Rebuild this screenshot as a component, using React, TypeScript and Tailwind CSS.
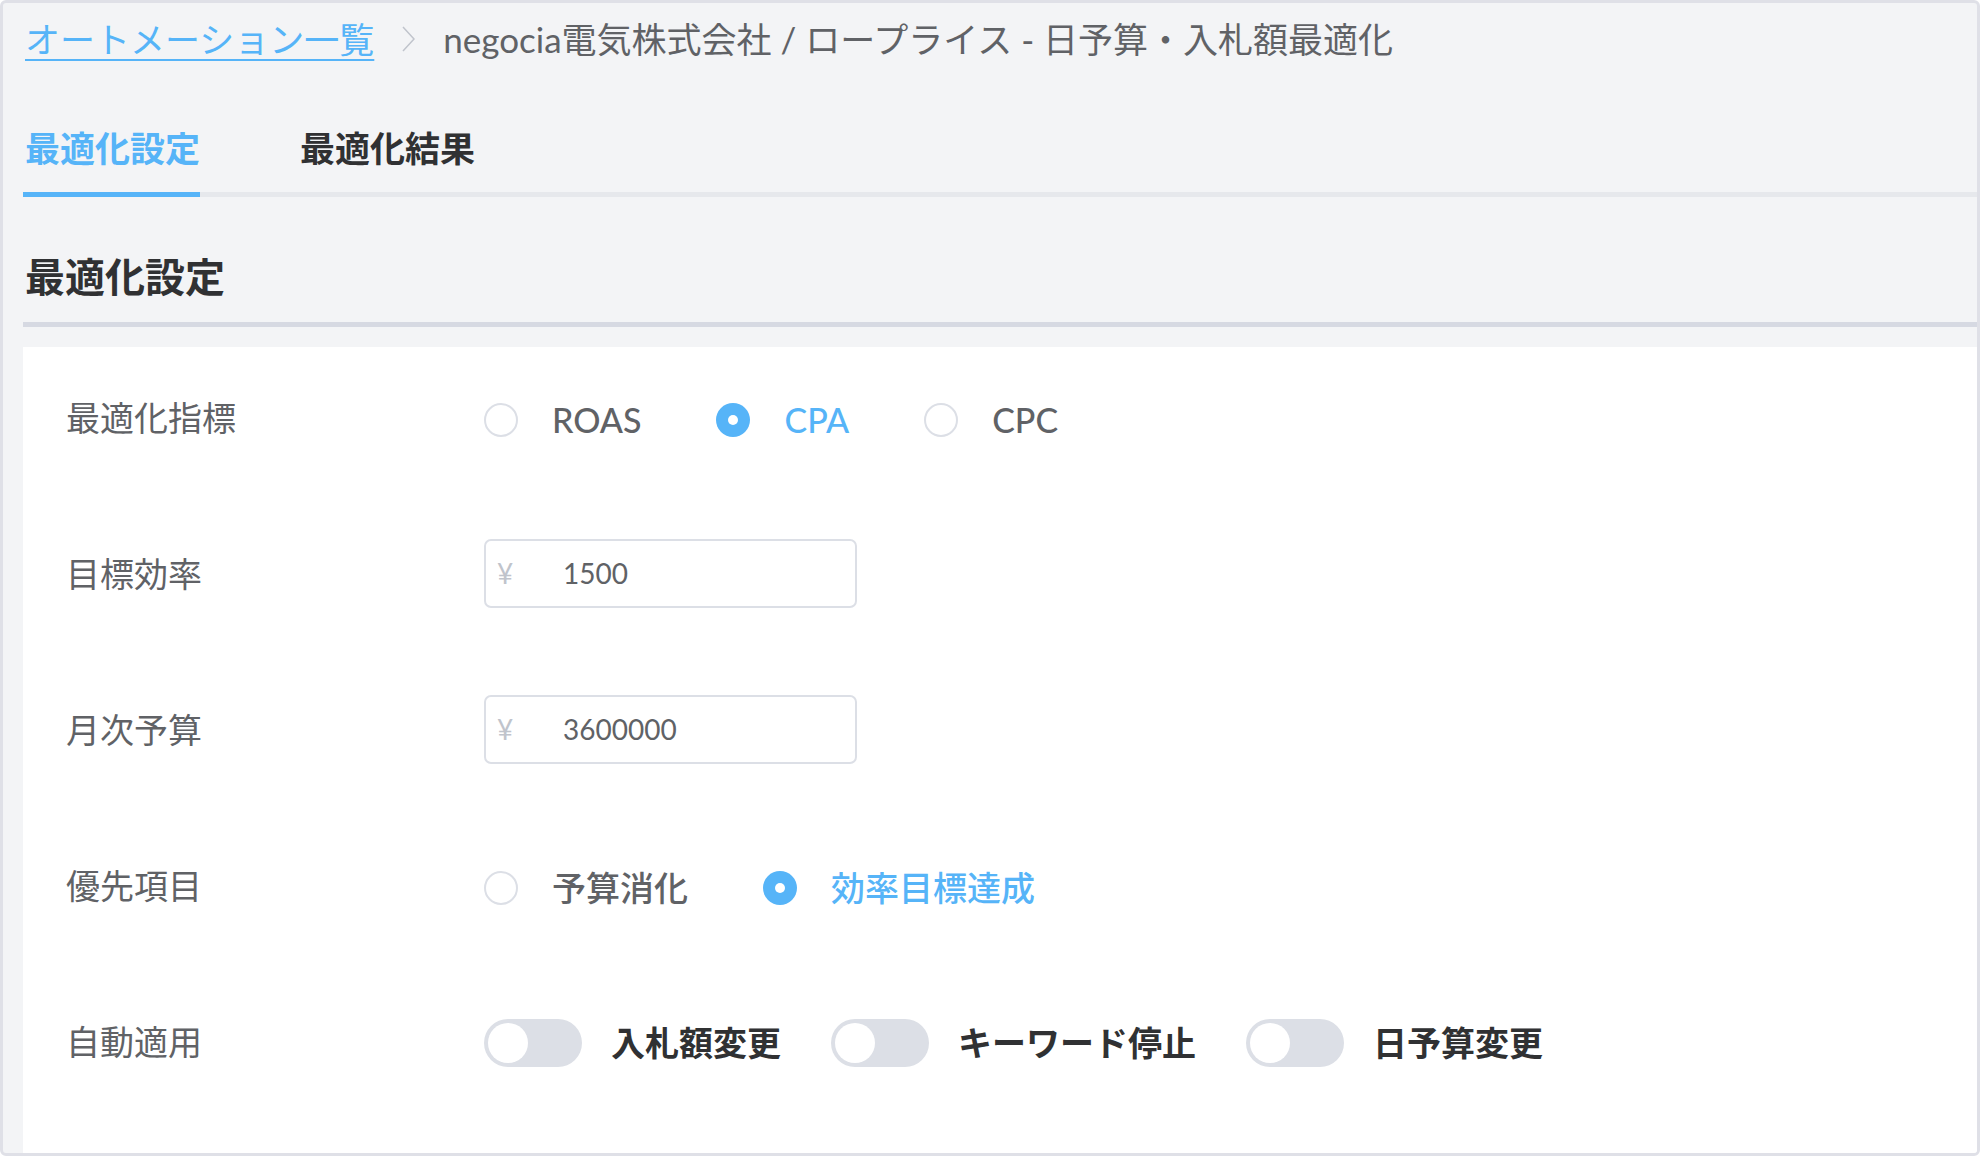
const blue = "text-[#56b4f8]";

function Radio({ label, checked }: { label: string; checked?: boolean }) {
  return (
    <div className="flex items-center gap-[34px]">
      {checked ? (
        <span className="w-[34px] h-[34px] rounded-full bg-[#56b4f8] flex items-center justify-center">
          <span className="w-[10px] h-[10px] rounded-full bg-white" />
        </span>
      ) : (
        <span className="w-[34px] h-[34px] rounded-full border-2 border-[#dcdfe6] bg-white" />
      )}
      <span className={`text-[34px] font-medium leading-none ${checked ? blue : "text-[#606266]"}`}>{label}</span>
    </div>
  );
}

function YenInput({ value }: { value: string }) {
  return (
    <div className="w-[373px] h-[69px] border-2 border-[#dcdfe6] rounded-[7px] bg-white flex items-center pl-[11px]">
      <span className="text-[28px] text-[#c0c4cc] w-[66px]">¥</span>
      <span className="text-[28px] text-[#606266]">{value}</span>
    </div>
  );
}

function Switch({ label }: { label: string }) {
  return (
    <div className="flex items-center gap-[29px] pt-[4px]">
      <span className="w-[98px] h-[48px] rounded-full bg-[#dcdfe6] flex items-center px-[4px]">
        <span className="w-[40px] h-[40px] rounded-full bg-white" />
      </span>
      <span className="text-[34px] font-bold text-[#303133] leading-none">{label}</span>
    </div>
  );
}

function Row({ label, children }: { label: string; children: React.ReactNode }) {
  return (
    <div className="flex items-center h-[70px]">
      <div className="w-[418px] text-[34px] text-[#606266]">{label}</div>
      <div className="flex items-center">{children}</div>
    </div>
  );
}

export default function App() {
  return (
    <div className="w-[1980px] h-[1156px] border-[3px] border-[#dfe0e7] rounded-[6px] bg-[#f3f4f6] flex flex-col font-['Lato','Noto_Sans_CJK_JP',sans-serif] overflow-hidden">
      {/* breadcrumb */}
      <div className="h-[72px] flex items-center pl-[22px] text-[35px] shrink-0">
        <a className={`${blue} underline decoration-2 underline-offset-[6px]`}>オートメーション一覧</a>
        <svg className="mx-[28px]" width="13" height="26" viewBox="0 0 13 26" fill="none">
          <polyline points="1,1 12,13 1,25" stroke="#c0c4cc" strokeWidth="1.5" />
        </svg>
        <span className="text-[#606266]">negocia電気株式会社 / ロープライス - 日予算・入札額最適化</span>
      </div>

      {/* tabs */}
      <div className="ml-[20px] mt-[53px] flex gap-[100px] border-b-[5px] border-[#e6e8ec] shrink-0">
        <div className={`-mb-[5px] border-b-[5px] border-[#56b4f8] pb-[23px] pl-[2px] text-[35px] leading-[41px] font-bold ${blue}`}>
          最適化設定
        </div>
        <div className="-mb-[5px] border-b-[5px] border-transparent pb-[23px] text-[35px] leading-[41px] font-bold text-[#303133]">
          最適化結果
        </div>
      </div>

      {/* section heading */}
      <div className="ml-[20px] mt-[56px] pl-[2px] pb-[21px] border-b-[5px] border-[#d6d9e2] shrink-0">
        <h2 className="text-[40px] leading-[48px] font-bold text-[#303133]">最適化設定</h2>
      </div>

      {/* form card */}
      <div className="ml-[20px] mt-[20px] flex-1 bg-white pl-[43px] pt-[35px] flex flex-col gap-[86px]">
        <Row label="最適化指標">
          <div className="flex items-center gap-[75px] pt-[6px]">
            <Radio label="ROAS" />
            <Radio label="CPA" checked />
            <Radio label="CPC" />
          </div>
        </Row>
        <Row label="目標効率">
          <YenInput value="1500" />
        </Row>
        <Row label="月次予算">
          <YenInput value="3600000" />
        </Row>
        <Row label="優先項目">
          <div className="flex items-center gap-[75px] pt-[6px]">
            <Radio label="予算消化" />
            <Radio label="効率目標達成" checked />
          </div>
        </Row>
        <Row label="自動適用">
          <div className="flex items-center gap-[50px]">
            <Switch label="入札額変更" />
            <Switch label="キーワード停止" />
            <Switch label="日予算変更" />
          </div>
        </Row>
      </div>
    </div>
  );
}
